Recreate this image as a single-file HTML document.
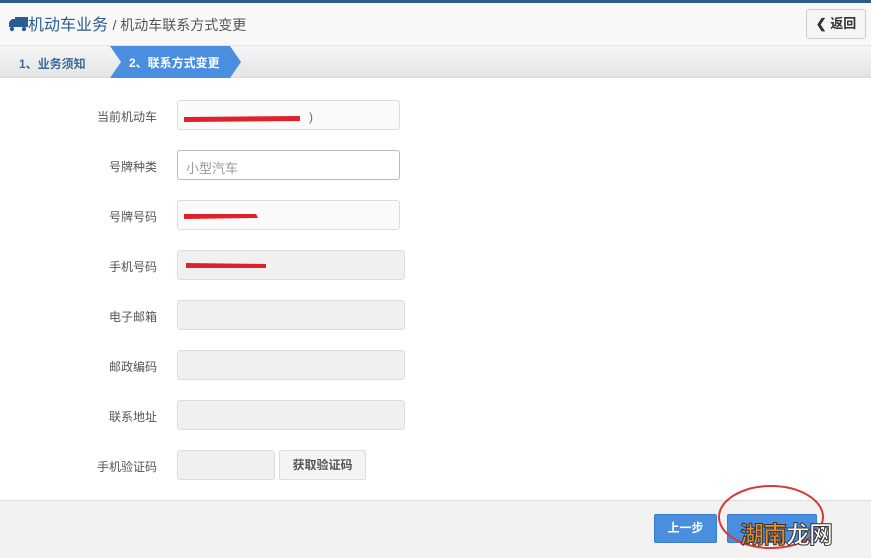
<!DOCTYPE html>
<html><head><meta charset="utf-8"><style>
*{margin:0;padding:0;box-sizing:border-box}
body{width:871px;height:558px;position:relative;overflow:hidden;background:#fff;font-family:"Liberation Sans","Noto Sans CJK SC",sans-serif;font-size:13px;color:#555}
.top{position:absolute;left:0;top:0;width:871px;height:46px;background:#f8f8f8;border-top:3px solid #2c5a8c;border-bottom:1px solid #e2e2e2}
.title{position:absolute;left:8px;top:8px;font-size:16px;color:#2a5d91}
.title span{font-size:14px;color:#555}
.back{position:absolute;left:806px;top:6px;width:60px;height:30px;border:1px solid #ccc;border-radius:3px;background:#f5f5f5;font-size:13px;font-weight:bold;color:#333;text-align:center;line-height:28px}
.steps{position:absolute;left:0;top:46px;width:871px;height:32px;background:linear-gradient(#f6f6f6,#e4e4e4);border-bottom:1px solid #ddd}
.s1{position:absolute;left:19px;top:9px;font-size:12px;font-weight:bold;color:#3a6aa0}
.s2{position:absolute;left:0;top:0}
.lbl{position:absolute;width:80px;left:77px;text-align:right;font-size:12px;color:#555}
.in{position:absolute;left:177px;width:223px;height:30px;border:1px solid #ddd;border-radius:3px;background:#f0f0f0}
.foot{position:absolute;left:0;top:500px;width:871px;height:58px;background:#f2f2f2;border-top:1px solid #ddd}
.btn{position:absolute;height:29px;background:#4a8ee0;border:1px solid #3b7bd0;border-radius:2px;color:#fff;font-size:12px;text-align:center;line-height:27px;font-weight:bold}
</style></head><body>
<div class="top">
<div class="title"><svg width="20" height="16" viewBox="0 0 20 16" style="vertical-align:-2px"><rect x="7" y="1" width="13" height="10" fill="#2a5d91"/><path d="M1 11V6l3-3h3v8z" fill="#2a5d91"/><circle cx="4" cy="13" r="2.2" fill="#2a5d91"/><circle cx="16" cy="13" r="2.2" fill="#2a5d91"/></svg>机动车业务 <span>/ 机动车联系方式变更</span></div>
<div class="back">❮ 返回</div>
</div>
<div class="steps">
<div class="s1">1、业务须知</div>
<svg class="s2" width="260" height="32"><polygon points="110,0 230,0 241,16 230,32 110,32 121,16" fill="#4a8ee0"/><text x="129" y="21" font-size="12" font-weight="bold" fill="#fff" font-family="Liberation Sans,Noto Sans CJK SC,sans-serif">2、联系方式变更</text></svg>
</div>
<div class="lbl" style="top:108px">当前机动车</div><div class="in" style="top:100px;background:#fafafa"><svg width="140" height="30"><path d="M6 16 L122 15 L122 20 L6 21z" fill="#e0202a"/><text x="131" y="20" font-size="12" fill="#666">)</text></svg></div>
<div class="lbl" style="top:158px">号牌种类</div><div class="in" style="top:150px;background:#fff;border-color:#bbb;padding:7px 8px;color:#999;font-size:13px">小型汽车</div>
<div class="lbl" style="top:208px">号牌号码</div><div class="in" style="top:200px;background:#fafafa"><svg width="90" height="30"><path d="M6 13 L78 13 L80 17 L6 18z" fill="#e0202a"/></svg></div>
<div class="lbl" style="top:258px">手机号码</div><div class="in" style="top:250px;width:228px"><svg width="100" height="30"><path d="M8 12 L88 13 L88 17 L8 17z" fill="#e0202a"/></svg></div>
<div class="lbl" style="top:308px">电子邮箱</div><div class="in" style="top:300px;width:228px"></div>
<div class="lbl" style="top:358px">邮政编码</div><div class="in" style="top:350px;width:228px"></div>
<div class="lbl" style="top:408px">联系地址</div><div class="in" style="top:400px;width:228px"></div>
<div class="lbl" style="top:458px">手机验证码</div><div class="in" style="top:450px;width:98px"></div>
<div style="position:absolute;left:279px;top:450px;width:87px;height:30px;border:1px solid #ddd;border-radius:2px;background:#f4f4f4;font-size:12px;font-weight:bold;color:#555;text-align:center;line-height:28px">获取验证码</div>
<div class="foot"></div>
<div class="btn" style="left:654px;top:514px;width:63px">上一步</div>
<div class="btn" style="left:727px;top:514px;width:90px"></div>
<svg style="position:absolute;left:717px;top:484px" width="115" height="70"><ellipse cx="54" cy="33" rx="52" ry="31" fill="none" stroke="#d83a3a" stroke-width="2"/></svg>
<div style="position:absolute;left:740px;top:519px;font-size:24px;font-weight:bold;letter-spacing:-1px;font-family:'Noto Sans CJK SC',sans-serif;line-height:28px"><span style="color:#f08a1c;-webkit-text-stroke:1px #333">湖南</span><span style="color:#fff;-webkit-text-stroke:1px #333">龙网</span></div>
</body></html>
